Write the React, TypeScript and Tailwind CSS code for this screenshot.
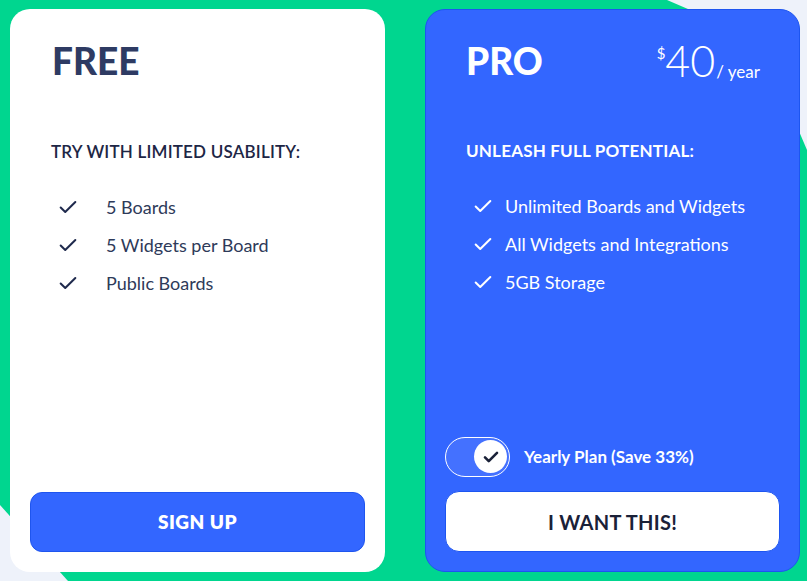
import React from "react";

const Check = ({ className }: { className?: string }) => (
  <svg viewBox="0 0 24 24" className={className} fill="none" stroke="currentColor" strokeWidth={2.2} strokeLinecap="round" strokeLinejoin="round">
    <path d="M4 12.5l5 5L20 6.5" />
  </svg>
);

export default function App() {
  const font = { fontFamily: "Lato, 'Open Sans', sans-serif" };
  return (
    <div className="relative w-[807px] h-[581px] overflow-hidden bg-[#00d68f]" style={font}>
      <svg className="absolute inset-0" width="807" height="581" viewBox="0 0 807 581">
        <polygon points="667,0 807,0 807,150 760,40" fill="#eef2fa" />
        <polygon points="0,505 0,581 68,581" fill="#eef2fa" />
      </svg>
      <div className="relative flex gap-[40px] pl-[10px] pt-[9px]">
        {/* FREE */}
        <div className="w-[375px] h-[563px] bg-white rounded-[20px] flex flex-col px-[20px] pb-[20px]">
          <div className="pl-[22px] pt-[33px] text-[37px] leading-[38px] font-black text-[#2e3b63]">FREE</div>
          <div className="pl-[21px] mt-[62px] text-[17px] leading-[20px] font-semibold text-[#1d2645] tracking-[0.2px]">TRY WITH LIMITED USABILITY:</div>
          <ul className="mt-[34px] pl-[27px] flex flex-col gap-[16px]">
            {["5 Boards", "5 Widgets per Board", "Public Boards"].map((t) => (
              <li key={t} className="flex items-center h-[22px] text-[18px] text-[#2e3a59]">
                <Check className="w-[22px] h-[22px] text-[#1f2a4d]" />
                <span className="ml-[27px]">{t}</span>
              </li>
            ))}
          </ul>
          <div className="flex-1" />
          <button className="h-[60px] w-full rounded-[12px] bg-[#3366ff] border border-[#1f55ee] text-white text-[19px] font-extrabold tracking-[0.5px]">
            SIGN UP
          </button>
        </div>
        {/* PRO */}
        <div className="w-[375px] h-[563px] bg-[#3366ff] border border-[#1d55f0] rounded-[20px] flex flex-col px-[19px] pb-[19px]">
          <div className="flex items-start justify-between h-[70px] pl-[21px] pr-[20px] pt-[32px]">
            <div className="text-[37px] leading-[38px] font-black text-white">PRO</div>
            <div className="flex items-start text-white">
              <span className="text-[15px] leading-[15px] mt-[4px]">$</span>
              <span className="text-[43px] leading-[38px] font-light">40</span>
              <span className="text-[17px] leading-[17px] mt-[21px] ml-[1px]">/ year</span>
            </div>
          </div>
          <div className="pl-[21px] mt-[61px] text-[17px] leading-[20px] font-bold text-white tracking-[0.2px]">UNLEASH FULL POTENTIAL:</div>
          <ul className="mt-[34px] pl-[27px] flex flex-col gap-[16px]">
            {["Unlimited Boards and Widgets", "All Widgets and Integrations", "5GB Storage"].map((t) => (
              <li key={t} className="flex items-center h-[22px] text-[18px] text-white">
                <Check className="w-[22px] h-[22px] text-white" />
                <span className="ml-[11px]">{t}</span>
              </li>
            ))}
          </ul>
          <div className="flex-1" />
          <div className="flex items-center mb-[14px]">
            <div className="relative w-[65px] h-[40px] rounded-full border-[1.5px] border-white bg-[#4471ff]">
              <div className="absolute right-[2px] top-[2px] w-[33px] h-[33px] rounded-full bg-white flex items-center justify-center">
                <Check className="w-[18px] h-[18px] text-[#1a2138] [stroke-width:3.5]" />
              </div>
            </div>
            <span className="ml-[14px] text-[17px] font-bold text-white">Yearly Plan (Save 33%)</span>
          </div>
          <button className="h-[61px] w-full rounded-[14px] bg-white border border-[#1d55f0] text-[#1a2138] text-[20px] font-bold tracking-[0.3px]">
            I WANT THIS!
          </button>
        </div>
      </div>
    </div>
  );
}
